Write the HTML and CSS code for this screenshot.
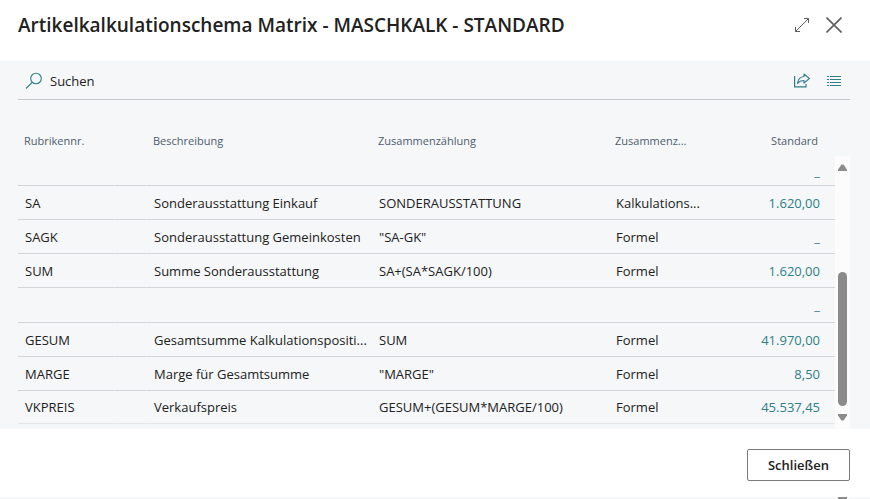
FILE: index.html
```html
<!DOCTYPE html>
<html lang="de">
<head>
    <meta charset="UTF-8">
    <meta name="viewport" content="width=device-width, initial-scale=1.0">
    <title>Artikelkalkulationschema Matrix</title>
    <link rel="stylesheet" href="styles.css">
</head>
<body>

<div class="dialog">
    <header class="dialog-header">
        <h1>Artikelkalkulationschema Matrix - MASCHKALK - STANDARD</h1>
        <button class="icon-button" aria-label="Maximieren">
            <svg width="16" height="16" viewBox="0 0 16 16" fill="none" stroke="#605e5c">
                <path d="M1.5 14.5L14.5 1.5M10 1.5h4.500v4.500M1.500 10v4.500h4.500"/>
            </svg>
        </button>
        <button class="icon-button" aria-label="Dialog verlassen">
            <svg width="16" height="16" viewBox="0 0 16 16" fill="none" stroke="#605e5c" stroke-width="1.600">
                <path d="M.5.5l15 15M15.500.5l-15 15"/>
            </svg>
        </button>
    </header>

    <main class="dialog-body">
        <div class="toolbar">
            <button class="search-button">
                <svg width="18" height="18" viewBox="0 0 18 18" fill="none" stroke="#2f7f86" stroke-width="1.100">
                    <circle cx="11" cy="6.500" r="5.300"/>
                    <path d="M7.200 10.300L1 16.500"/>
                </svg>
                Suchen
            </button>
            <button class="icon-button" aria-label="Teilen">
                <svg width="16" height="16" viewBox="0 0 16 16" fill="none" stroke="#2f7f86" stroke-width="1.200">
                    <path d="M.6 3v10.900h11.400v-3"/>
                    <path d="M10 1l5.400 4.500-5.400 4.500V7.500C7 7.500 5 8.500 3.500 10.500 4 6.500 6 3.800 10 3.500z" stroke="#3f7f95" stroke-linejoin="round"/>
                </svg>
            </button>
            <button class="icon-button" aria-label="Liste anzeigen">
                <svg width="16" height="16" viewBox="0 0 16 16" stroke="#2f7f86">
                    <path d="M1 3.500h2M4 3.500h11M1 6.500h2M4 6.500h11M1 9.500h2M4 9.500h11M1 12.500h2M4 12.500h11"/>
                </svg>
            </button>
        </div>

        <div class="list">
            <table class="matrix">
                <colgroup>
                    <col class="col-code">
                    <col class="col-menu">
                    <col class="col-text">
                    <col>
                    <col class="col-type">
                    <col class="col-value">
                </colgroup>
                <thead>
                    <tr>
                        <th>Rubrikennr.</th>
                        <td></td>
                        <th>Beschreibung</th>
                        <th>Zusammenzählung</th>
                        <th>Zusammenz...</th>
                        <th class="value">Standard</th>
                    </tr>
                </thead>
                <tbody>
                    <tr class="row-first">
                        <td></td><td></td><td></td><td></td><td></td>
                        <td class="value"><a href="#">_</a></td>
                    </tr>
                    <tr>
                        <td>SA</td><td></td>
                        <td>Sonderausstattung Einkauf</td>
                        <td>SONDERAUSSTATTUNG</td>
                        <td>Kalkulations...</td>
                        <td class="value"><a href="#">1.620,00</a></td>
                    </tr>
                    <tr>
                        <td>SAGK</td><td></td>
                        <td>Sonderausstattung Gemeinkosten</td>
                        <td>"SA-GK"</td>
                        <td>Formel</td>
                        <td class="value"><a href="#">_</a></td>
                    </tr>
                    <tr>
                        <td>SUM</td><td></td>
                        <td>Summe Sonderausstattung</td>
                        <td>SA+(SA*SAGK/100)</td>
                        <td>Formel</td>
                        <td class="value"><a href="#">1.620,00</a></td>
                    </tr>
                    <tr class="row-blank">
                        <td></td><td></td><td></td><td></td><td></td>
                        <td class="value"><a href="#">_</a></td>
                    </tr>
                    <tr>
                        <td>GESUM</td><td></td>
                        <td>Gesamtsumme Kalkulationspositi...</td>
                        <td>SUM</td>
                        <td>Formel</td>
                        <td class="value"><a href="#">41.970,00</a></td>
                    </tr>
                    <tr>
                        <td>MARGE</td><td></td>
                        <td>Marge für Gesamtsumme</td>
                        <td>"MARGE"</td>
                        <td>Formel</td>
                        <td class="value"><a href="#">8,50</a></td>
                    </tr>
                    <tr class="row-last">
                        <td>VKPREIS</td><td></td>
                        <td>Verkaufspreis</td>
                        <td>GESUM+(GESUM*MARGE/100)</td>
                        <td>Formel</td>
                        <td class="value"><a href="#">45.537,45</a></td>
                    </tr>
                </tbody>
            </table>

            <div class="scrollbar">
                <svg width="9" height="7" viewBox="0 0 9 7" fill="#8b8b8b"><path d="M3.500.5h2L9 5.500V7H0V5.500z"/></svg>
                <div class="scroll-track"><div class="scroll-thumb"></div></div>
                <svg width="9" height="7" viewBox="0 0 9 7" fill="#8b8b8b"><path d="M3.500 6.500h2L9 1.500V0H0v1.500z"/></svg>
            </div>
        </div>
    </main>

    <footer class="dialog-footer">
        <button class="close-button">Schließen</button>
    </footer>
</div>

<!-- edge of the page behind the dialog -->
<div class="page-edge">
    <div class="page-scroll"><div class="page-thumb"></div></div>
</div>

</body>
</html>
```
FILE: styles.css
```css
* {
    box-sizing: border-box;
}

body {
    margin: 0;
    min-height: 100vh;
    display: flex;
    flex-direction: column;
    font-family: "Open Sans", "Noto Sans", sans-serif;
    font-size: 13px;
    line-height: 20px;
    color: #212121;
    background: #ffffff;
}

button {
    font: inherit;
    color: inherit;
    cursor: pointer;
}

a {
    color: #2f7f86;
    text-decoration: none;
}

svg {
    display: block;
}

.dialog {
    flex: 1;
    display: flex;
    flex-direction: column;
}

.dialog-header {
    display: flex;
    align-items: center;
    gap: 16px;
    height: 61px;
    padding: 0 28px 11px 18px;
}

h1 {
    flex: 1;
    margin: 0;
    font-size: 19px;
    line-height: 28px;
    font-weight: 600;
}

.icon-button {
    padding: 0;
    border: none;
    background: none;
}

.dialog-body {
    padding: 0 20px 0 18px;
    background: #f5f7f9;
}

.toolbar {
    display: flex;
    align-items: center;
    gap: 16px;
    height: 39px;
    padding: 2px 8px 0 7px;
    border-bottom: 1px solid #c6c9cb;
}

.search-button {
    display: flex;
    align-items: center;
    gap: 7px;
    margin-right: auto;
    padding: 0;
    border: none;
    background: none;
}

.list {
    display: flex;
    align-items: flex-start;
    padding-bottom: 5px;
}

.matrix {
    flex: 1;
    min-width: 0;
    table-layout: fixed;
    border-collapse: separate;
    border-spacing: 0;
}

.col-code {
    width: 97px;
}

.col-menu {
    width: 32px;
}

.col-text {
    width: 225px;
}

.col-type {
    width: 98px;
}

.col-value {
    width: 128px;
}

thead tr {
    height: 56px;
}

th {
    padding: 26px 6px 0;
    font-size: 11px;
    line-height: 30px;
    font-weight: 400;
    text-align: left;
    vertical-align: top;
    white-space: nowrap;
    color: #505c6d;
}

th.value {
    padding-right: 17px;
}

tbody tr {
    height: 34px;
}

tbody .row-first {
    height: 30px;
}

tbody .row-blank {
    height: 35px;
}

tbody .row-last {
    height: 33px;
}

tbody td {
    padding: 0 0 0 7px;
    border-bottom: 1px solid #d2d5d8;
    white-space: nowrap;
}

/* small break in the row line around the menu column */
tbody td:nth-child(-n+2) {
    border-right: 1px solid #f5f7f9;
}

.row-last td {
    border-bottom-color: #e3e5e7;
}

.value {
    text-align: right;
}

tbody td.value {
    padding-right: 15px;
}

.scrollbar {
    align-self: stretch;
    display: flex;
    flex-direction: column;
    align-items: center;
    width: 15px;
    margin: 56px 0 -5px;
    padding: 8px 0;
    background: #fcfcfc;
}

.scroll-track {
    flex: 1;
    display: flex;
    flex-direction: column;
    justify-content: flex-end;
    padding-bottom: 8px;
}

.scroll-thumb {
    width: 9px;
    height: 57%;
    border-radius: 5px;
    background: #8b8b8b;
}

.dialog-footer {
    display: flex;
    justify-content: flex-end;
    padding: 20px 20px 16px;
}

.close-button {
    height: 32px;
    padding: 0 20px;
    font-weight: 600;
    border: 1px solid #7b7b7b;
    border-radius: 2px;
    background: #ffffff;
}

.page-edge {
    display: flex;
    justify-content: flex-end;
    height: 2px;
    padding-right: 20px;
    background: #f5f7f9;
}

.page-scroll {
    display: flex;
    justify-content: center;
    width: 15px;
    background: #fcfcfc;
}

.page-thumb {
    width: 9px;
    background: #8b8b8b;
}
```
